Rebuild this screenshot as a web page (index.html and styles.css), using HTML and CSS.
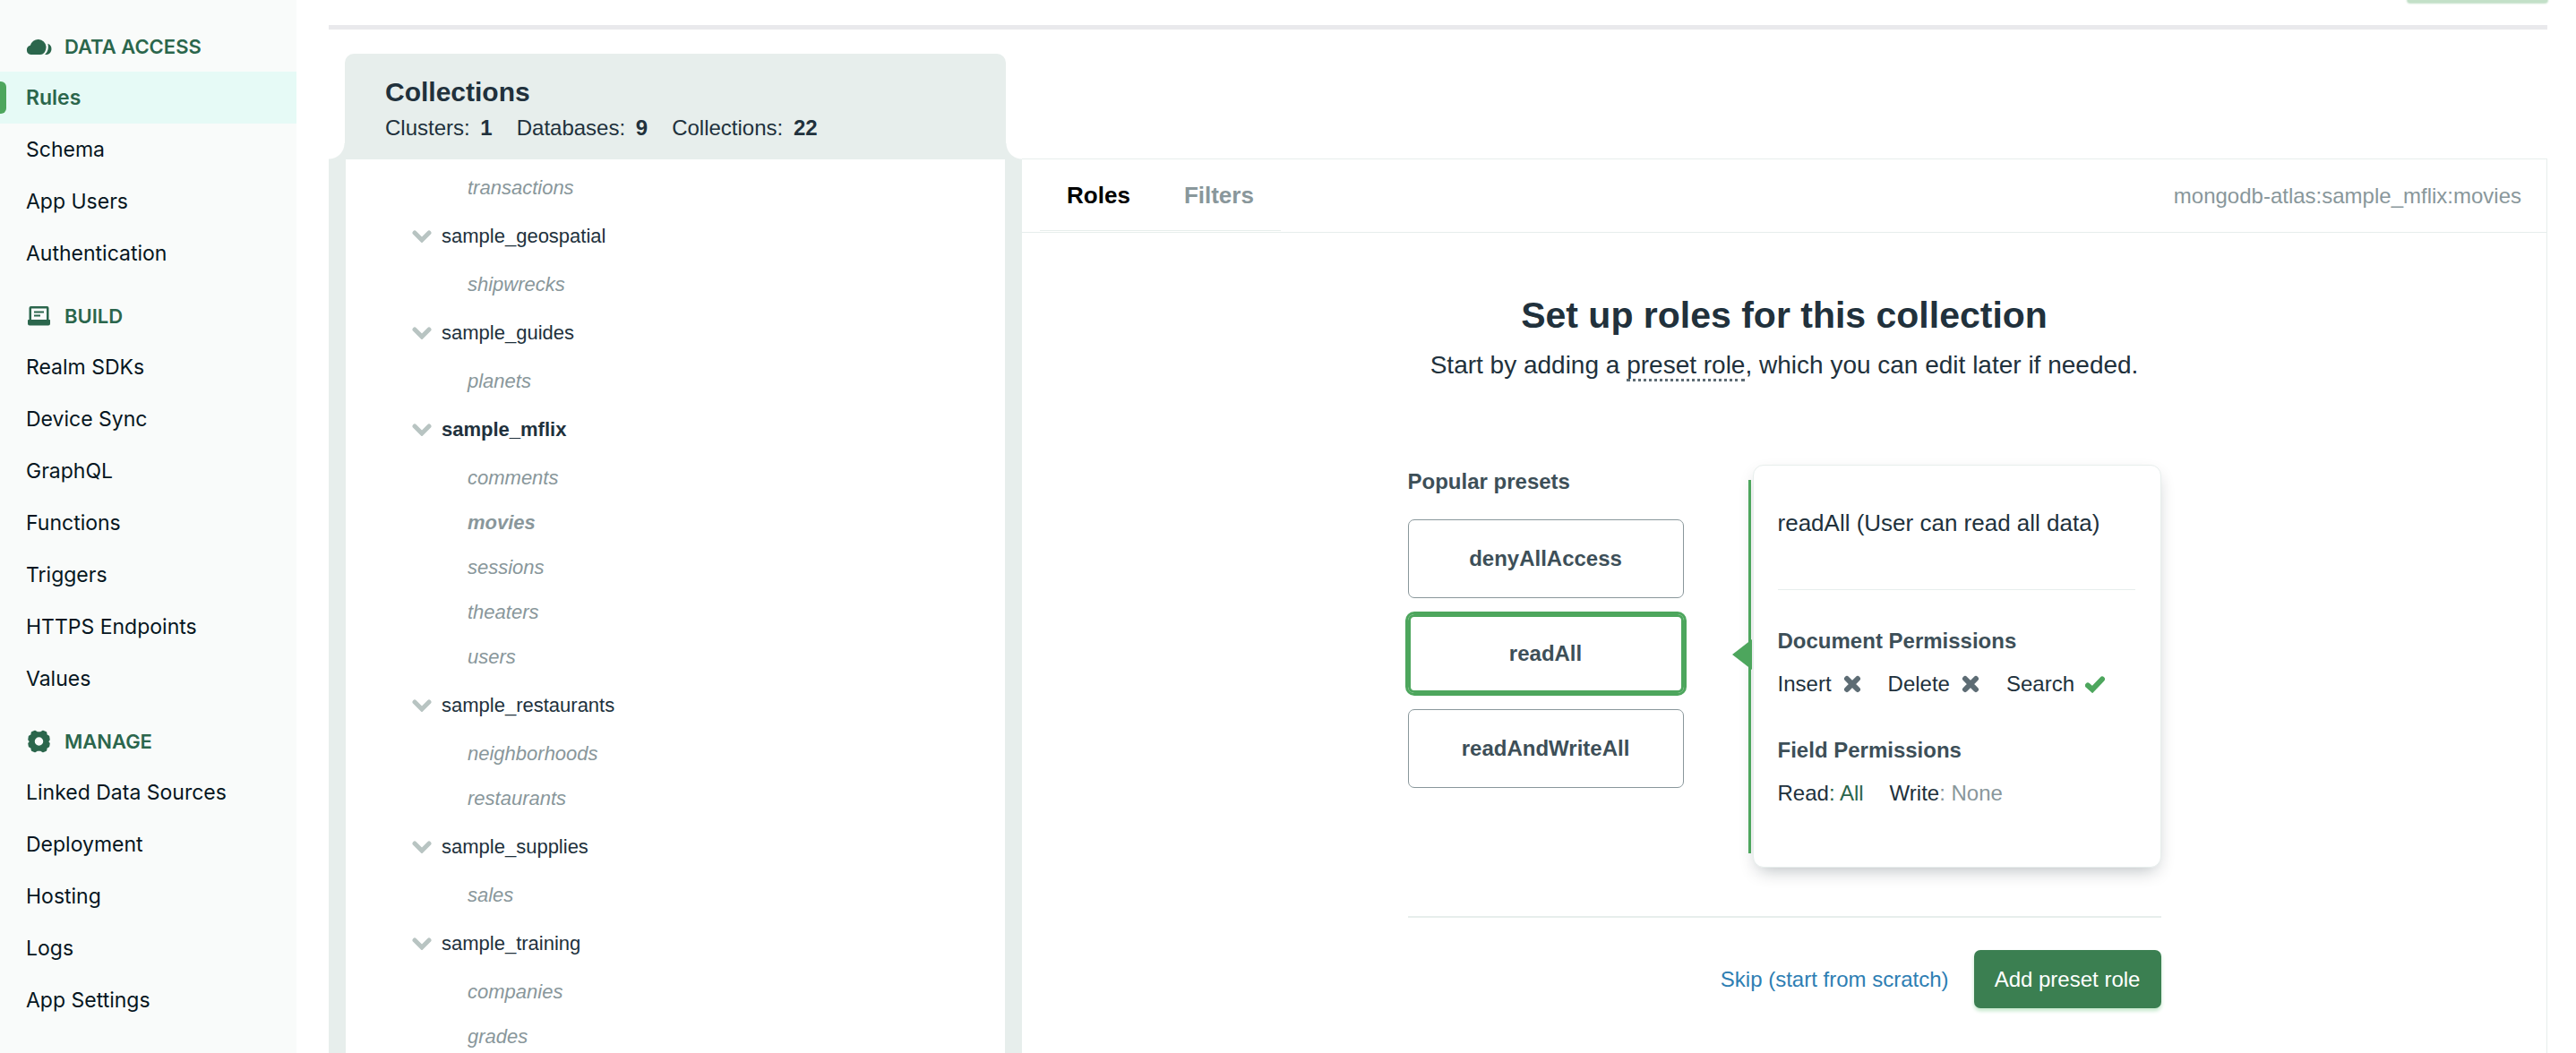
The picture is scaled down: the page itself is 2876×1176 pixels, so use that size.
FILE: index.html
```html
<!DOCTYPE html>
<html lang="en">
<head>
<meta charset="utf-8">
<title>Rules</title>
<link rel="stylesheet" href="styles.css">
</head>
<body>
<div class="app">
  <nav class="sidebar">
    <section class="nav-section">
      <h2 class="nav-title">
        <svg class="nav-icon" viewBox="0 0 29 26" aria-hidden="true"><path d="M5.500 22A5.200 5.200 0 0 1 4.800 11.800A9 9 0 0 1 22.500 13C22.500 17.500 20.500 22 16 22Z"/><path d="M24.400 9.800A6.400 6.400 0 0 1 23.500 22H21C24.500 19 25.600 14.500 24.400 9.800Z"/></svg>
        Data Access
      </h2>
      <ul class="nav-list">
        <li><a class="nav-link active" href="#">Rules</a></li>
        <li><a class="nav-link" href="#">Schema</a></li>
        <li><a class="nav-link" href="#">App Users</a></li>
        <li><a class="nav-link" href="#">Authentication</a></li>
      </ul>
    </section>
    <section class="nav-section">
      <h2 class="nav-title">
        <svg class="nav-icon" viewBox="0 0 29 24" aria-hidden="true"><path fill-rule="evenodd" d="M5.500 1H23.500Q25.500 1 25.500 3V16H26.500Q27 16 27 17V20.500Q27 22.500 25 22.500H4Q2 22.500 2 20.500V17Q2 16 3 16H3.500V3Q3.500 1 5.500 1ZM6 3.500V16H23V3.500Z"/><path d="M9 6.500H20V8.500H9ZM9 10.500H16V12.500H9Z"/></svg>
        Build
      </h2>
      <ul class="nav-list">
        <li><a class="nav-link" href="#">Realm SDKs</a></li>
        <li><a class="nav-link" href="#">Device Sync</a></li>
        <li><a class="nav-link" href="#">GraphQL</a></li>
        <li><a class="nav-link" href="#">Functions</a></li>
        <li><a class="nav-link" href="#">Triggers</a></li>
        <li><a class="nav-link" href="#">HTTPS Endpoints</a></li>
        <li><a class="nav-link" href="#">Values</a></li>
      </ul>
    </section>
    <section class="nav-section">
      <h2 class="nav-title">
        <svg class="nav-icon" viewBox="0 0 29 26" aria-hidden="true"><path fill-rule="evenodd" stroke="currentColor" stroke-width="1.500" stroke-linejoin="round" d="M10 1.500L12.500 3H16.500L19 1.500L22.500 3L23 6L25.500 7.500L26 11L24.500 13L26 15.500L25.500 18.500L23 20L22.500 23L19 24.500L16.500 23H12.500L10 24.500L6.500 23L6 20L3.500 18.500L3 15.500L4.500 13L3 11L3.500 7.500L6 6L6.500 3ZM14.500 7.500A5.500 5.500 0 1 0 14.500 18.500A5.500 5.500 0 1 0 14.500 7.500Z"/></svg>
        Manage
      </h2>
      <ul class="nav-list">
        <li><a class="nav-link" href="#">Linked Data Sources</a></li>
        <li><a class="nav-link" href="#">Deployment</a></li>
        <li><a class="nav-link" href="#">Hosting</a></li>
        <li><a class="nav-link" href="#">Logs</a></li>
        <li><a class="nav-link" href="#">App Settings</a></li>
      </ul>
    </section>
  </nav>

  <main class="main">
    <div class="topbar"><div class="topbar-action"></div></div>
    <div class="workspace">
      <section class="collections">
        <header class="collections-head">
          <h2 class="collections-title">Collections</h2>
          <p class="stats"><span>Clusters: <b>1</b></span><span>Databases: <b>9</b></span><span>Collections: <b>22</b></span></p>
        </header>
        <ul class="tree">
          <li>
            <ul class="leaves"><li>transactions</li></ul>
          </li>
          <li>
            <div class="db"><svg class="chevron" viewBox="0 0 22 14" aria-hidden="true"><path d="M3 3L11 11L19 3"/></svg>sample_geospatial</div>
            <ul class="leaves"><li>shipwrecks</li></ul>
          </li>
          <li>
            <div class="db"><svg class="chevron" viewBox="0 0 22 14" aria-hidden="true"><path d="M3 3L11 11L19 3"/></svg>sample_guides</div>
            <ul class="leaves"><li>planets</li></ul>
          </li>
          <li>
            <div class="db current"><svg class="chevron" viewBox="0 0 22 14" aria-hidden="true"><path d="M3 3L11 11L19 3"/></svg>sample_mflix</div>
            <ul class="leaves"><li>comments</li><li class="current">movies</li><li>sessions</li><li>theaters</li><li>users</li></ul>
          </li>
          <li>
            <div class="db"><svg class="chevron" viewBox="0 0 22 14" aria-hidden="true"><path d="M3 3L11 11L19 3"/></svg>sample_restaurants</div>
            <ul class="leaves"><li>neighborhoods</li><li>restaurants</li></ul>
          </li>
          <li>
            <div class="db"><svg class="chevron" viewBox="0 0 22 14" aria-hidden="true"><path d="M3 3L11 11L19 3"/></svg>sample_supplies</div>
            <ul class="leaves"><li>sales</li></ul>
          </li>
          <li>
            <div class="db"><svg class="chevron" viewBox="0 0 22 14" aria-hidden="true"><path d="M3 3L11 11L19 3"/></svg>sample_training</div>
            <ul class="leaves"><li>companies</li><li>grades</li></ul>
          </li>
        </ul>
      </section>

      <section class="panel">
        <header class="panel-head">
          <div class="tabs">
            <button class="tab selected" type="button">Roles</button>
            <button class="tab" type="button">Filters</button>
          </div>
          <span class="path">mongodb-atlas:sample_mflix:movies</span>
        </header>
        <div class="setup">
          <h1 class="setup-title">Set up roles for this collection</h1>
          <p class="setup-text">Start by adding a <span class="term">preset role</span>, which you can edit later if needed.</p>
          <div class="setup-body">
            <div class="presets">
              <h3 class="label">Popular presets</h3>
              <button class="preset" type="button">denyAllAccess</button>
              <button class="preset chosen" type="button">readAll</button>
              <button class="preset" type="button">readAndWriteAll</button>
            </div>
            <article class="card">
              <p class="card-title">readAll (User can read all data)</p>
              <h3 class="label">Document Permissions</h3>
              <p class="perms">
                <span class="perm">Insert <svg class="mark cross" viewBox="0 0 22 20" role="img" aria-label="no"><path d="M5 4L17 16M17 4L5 16"/></svg></span>
                <span class="perm">Delete <svg class="mark cross" viewBox="0 0 22 20" role="img" aria-label="no"><path d="M5 4L17 16M17 4L5 16"/></svg></span>
                <span class="perm">Search <svg class="mark check" viewBox="0 0 22 20" role="img" aria-label="yes"><path d="M3 11.500L8 16L19 4.500"/></svg></span>
              </p>
              <h3 class="label">Field Permissions</h3>
              <p class="perms">
                <span>Read<span class="all">: All</span></span>
                <span>Write<span class="none">: None</span></span>
              </p>
            </article>
          </div>
          <footer class="setup-foot">
            <a class="skip" href="#">Skip (start from scratch)</a>
            <button class="primary" type="button">Add preset role</button>
          </footer>
        </div>
      </section>
    </div>
  </main>
</div>
</body>
</html>
```
FILE: styles.css
```css
* {
  box-sizing: border-box;
  margin: 0;
  padding: 0;
}

body {
  background: #fff;
  color: #21313c;
  font-family: "Liberation Sans", Arial, sans-serif;
  font-size: 24px;
  line-height: 28px;
  overflow: hidden;
}

ul {
  list-style: none;
}

button {
  font: inherit;
  color: inherit;
  background: none;
  border: 0;
  cursor: pointer;
}

a {
  text-decoration: none;
}

.app {
  display: flex;
  height: 100vh;
  overflow: hidden;
}

/* Sidebar */
.sidebar {
  flex: 0 0 331px;
  display: flex;
  flex-direction: column;
  gap: 13px;
  padding-top: 24px;
  background: #f9fbfa;
  font-family: Inter, "Open Sans", sans-serif;
}

.nav-title {
  display: flex;
  align-items: center;
  gap: 14px;
  height: 56px;
  padding-left: 29px;
  color: #2b664c;
  font-size: 22px;
  font-weight: 600;
  text-transform: uppercase;
}

.nav-icon {
  width: 29px;
  height: 26px;
  fill: currentColor;
}

.nav-link {
  display: flex;
  align-items: center;
  height: 58px;
  padding-left: 29px;
  color: #061621;
  font-size: 23px;
}

.nav-link.active {
  position: relative;
  background: #e6faf6;
  color: #2b664c;
  font-weight: 600;
}

.nav-link.active::before {
  content: "";
  position: absolute;
  left: 0;
  top: 11px;
  bottom: 11px;
  width: 7px;
  border-radius: 0 6px 6px 0;
  background: #4da65d;
}

/* Main column */
.main {
  flex: 1;
  min-width: 0;
  display: flex;
  flex-direction: column;
  padding: 0 32px 0 36px;
}

.topbar {
  flex: none;
  display: flex;
  justify-content: flex-end;
  height: 33px;
  border-bottom: 5px solid #e9e9ec;
}

.topbar-action {
  width: 156px;
  height: 3px;
  border-radius: 0 0 8px 8px;
  background: #c3e0c8;
  box-shadow: 0 0 2px 1px #c3e0c8;
}

.workspace {
  flex: 1;
  display: grid;
  grid-template-columns: 5fr 11fr;
  padding-top: 27px;
}

/* Collections */
.collections {
  display: flex;
  flex-direction: column;
}

.collections-head {
  position: relative;
  height: 118px;
  margin: 0 18px;
  padding: 26px 45px;
  border-radius: 10px 10px 0 0;
  background: #e7eeec;
}

.collections-head::before,
.collections-head::after {
  content: "";
  position: absolute;
  bottom: 0;
  width: 18px;
  height: 18px;
}

.collections-head::before {
  right: 100%;
  background: radial-gradient(circle at 0 0, transparent 17px, #e7eeec 18px);
}

.collections-head::after {
  left: 100%;
  background: radial-gradient(circle at 100% 0, transparent 17px, #e7eeec 18px);
}

.collections-title {
  font-size: 30px;
  line-height: 34px;
}

.stats {
  display: flex;
  gap: 27px;
  padding-top: 9px;
}

.stats b {
  margin-left: 5px;
}

.tree {
  flex: 1;
  padding: 7px 0 0 74px;
  border: solid #e7eeec;
  border-width: 0 19px;
  font-size: 22px;
}

.db {
  display: flex;
  align-items: center;
  gap: 11px;
  height: 58px;
}

.chevron {
  width: 22px;
  height: 14px;
  fill: none;
  stroke: #b8c4c2;
  stroke-width: 5px;
  stroke-linecap: round;
}

.leaves li {
  padding-left: 62px;
  color: #89979b;
  font-style: italic;
  line-height: 50px;
}

.db.current,
.leaves .current {
  font-weight: bold;
}

/* Rules panel */
.panel {
  margin-top: 117px;
  border: 1px solid #e7eeec;
  border-width: 1px 1px 0 0;
}

.panel-head {
  display: flex;
  justify-content: space-between;
  align-items: center;
  height: 82px;
  padding: 0 28px 0 20px;
  border-bottom: 1px solid #e7eeec;
}

.tabs {
  display: flex;
  align-self: stretch;
  gap: 60px;
  margin-bottom: 1px;
  padding: 0 30px;
  border-bottom: 1px solid #e7eeec;
}

.tab {
  color: #89979b;
  font-size: 26px;
  font-weight: bold;
}

.tab.selected {
  color: #000;
}

.path {
  color: #89979b;
}

.setup {
  display: flex;
  flex-direction: column;
  width: 841px;
  max-width: 100%;
  margin: 0 auto;
  padding-top: 68px;
}

.setup-title {
  font-size: 41px;
  line-height: 48px;
  text-align: center;
}

.setup-text {
  padding-top: 16px;
  font-size: 28px;
  line-height: 32px;
  text-align: center;
  white-space: nowrap;
}

.term {
  border-bottom: 3px dotted #5d6c74;
}

.setup-body {
  display: flex;
  justify-content: space-between;
  padding-top: 95px;
}

.presets {
  display: flex;
  flex-direction: column;
  gap: 18px;
  width: 308px;
  padding-top: 5px;
}

.label {
  color: #3d4f58;
  font-size: 24px;
  line-height: 28px;
}

.presets .label {
  padding-bottom: 10px;
}

.preset {
  height: 88px;
  border: 1px solid #89979b;
  border-radius: 7px;
  color: #3d4f58;
  font-weight: bold;
}

.preset.chosen {
  border: 3px solid #4da65d;
  box-shadow: 0 0 0 3px #4da65d;
}

.card {
  position: relative;
  width: 456px;
  height: 450px;
  padding: 49px 28px 0 27px;
  border: 1px solid #e7eeec;
  border-radius: 12px;
  background: #fff;
  box-shadow: 0 8px 20px -6px rgba(6, 22, 33, 0.3);
}

.card::before {
  content: "";
  position: absolute;
  left: -6px;
  top: 16px;
  bottom: 15px;
  width: 3px;
  background: #4da65d;
}

.card::after {
  content: "";
  position: absolute;
  left: -24px;
  top: 194px;
  border: solid transparent;
  border-width: 17px 22px 17px 0;
  border-right-color: #4da65d;
}

.card-title {
  margin-bottom: 43px;
  padding-bottom: 59px;
  border-bottom: 1px solid #e7eeec;
  font-size: 26px;
  line-height: 30px;
}

.perms {
  display: flex;
  gap: 29px;
  padding: 20px 0 46px;
}

.perm {
  display: flex;
  align-items: center;
  gap: 12px;
}

.mark {
  width: 22px;
  height: 20px;
  fill: none;
  stroke-width: 6px;
  stroke-linecap: round;
}

.cross {
  stroke: #5d6c74;
}

.check {
  stroke: #4da65d;
}

.all {
  color: #2b664c;
}

.none {
  color: #89979b;
}

.setup-foot {
  display: flex;
  justify-content: flex-end;
  align-items: center;
  gap: 28px;
  margin-top: 54px;
  padding-top: 36px;
  border-top: 2px solid #e7eeec;
}

.skip {
  color: #2d7eb3;
}

.primary {
  width: 209px;
  height: 65px;
  border-radius: 7px;
  background: #3b7f51;
  color: #fff;
  box-shadow: 0 3px 4px #c3e7ca;
}
```
